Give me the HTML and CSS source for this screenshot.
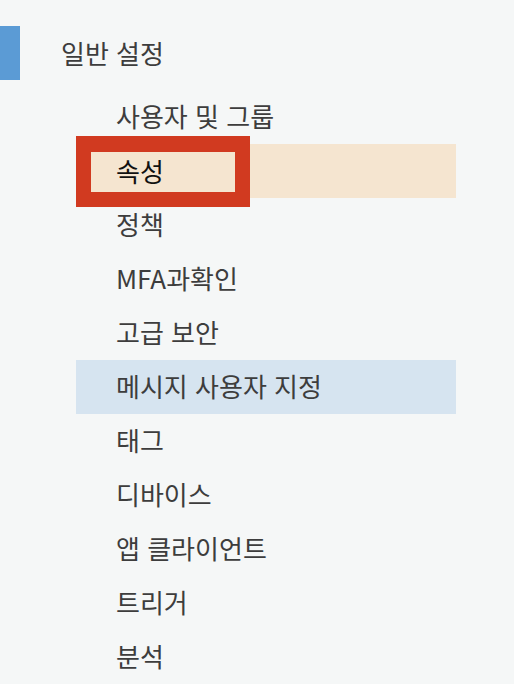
FILE: index.html
```html
<!DOCTYPE html>
<html lang="ko">
<head>
<meta charset="utf-8">
<link rel="stylesheet" href="styles.css">
</head>
<body>
<nav class="sidebar">
  <div class="section">
    <span class="marker"></span>
    <span class="section-title">일반 설정</span>
  </div>
  <ul class="menu">
    <li class="item">사용자 및 그룹</li>
    <li class="item selected"><span class="callout">속성</span></li>
    <li class="item">정책</li>
    <li class="item">MFA과확인</li>
    <li class="item">고급 보안</li>
    <li class="item hover">메시지 사용자 지정</li>
    <li class="item">태그</li>
    <li class="item">디바이스</li>
    <li class="item">앱 클라이언트</li>
    <li class="item">트리거</li>
    <li class="item">분석</li>
  </ul>
</nav>
</body>
</html>
```
FILE: styles.css
```css
html, body {
  margin: 0;
  padding: 0;
  background: #f5f7f7;
}
body {
  font-family: "Noto Sans CJK KR", "Noto Sans", sans-serif;
  color: #3d3d3d;
  width: 514px;
  height: 684px;
  overflow: hidden;
}
.sidebar {
  padding-top: 26px;
}
.section {
  display: flex;
  align-items: center;
  height: 54px;
}
.marker {
  width: 20px;
  height: 54px;
  background: #5b9bd5;
  flex: none;
}
.section-title {
  margin-left: 41px;
  font-size: 26px;
  line-height: 52px;
  color: #3d3d3d;
}
.menu {
  list-style: none;
  margin: 10px 0 0 76px;
  padding: 0;
  width: 380px;
}
.item {
  position: relative;
  height: 54px;
  line-height: 52px;
  padding-left: 40px;
  font-size: 26px;
  color: #3d3d3d;
}
.selected {
  background: #f5e5d0;
  color: #111;
}
.hover {
  background: #d6e4f0;
}
.callout {
  position: absolute;
  left: 0;
  top: -8px;
  width: 119px;
  height: 40px;
  border: solid #d13a20;
  border-width: 16px 15px 15px 15px;
  padding-left: 25px;
  line-height: 38px;
}
```
